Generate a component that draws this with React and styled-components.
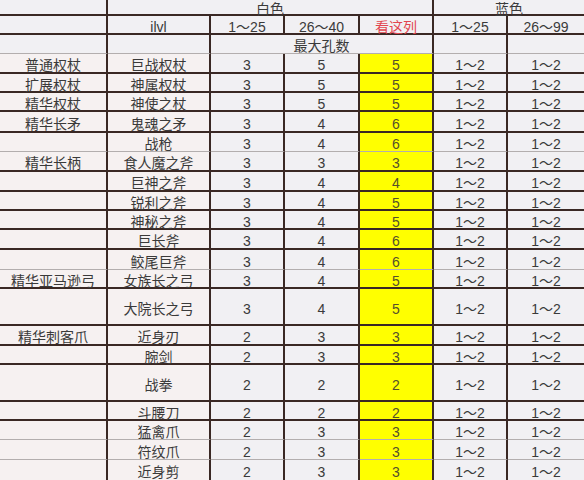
import React from 'react';
import styled, { createGlobalStyle } from 'styled-components';

const GlobalStyle = createGlobalStyle`
  body {
    margin: 0;
    background: #f2f1f3;
    overflow: hidden;
  }
`;

const DARK = '#3a2824';

const Sheet = styled.div`
  display: grid;
  grid-template-columns: 108px 103px 74px 75px 74px 74px 76px;
  grid-template-rows: ${(p) => p.$rows.map((h) => h + 'px').join(' ')};
  width: 584px;
  height: 480px;
  overflow: hidden;
  font-family: "Liberation Sans", "Noto Sans CJK SC", sans-serif;
  font-size: 14px;
  background: #f2f1f3;
`;

const Cell = styled.div`
  display: flex;
  align-items: center;
  justify-content: center;
  box-sizing: border-box;
  grid-column: span ${(p) => p.$span || 1};
  padding-top: 4px;
  line-height: 1;
  white-space: nowrap;
  border-right: ${(p) => (p.$last ? '0' : `2px solid ${DARK}`)};
  border-bottom: ${(p) =>
    p.$line === 'light' ? '1px solid #b3aeae' : p.$line === 'none' ? '0' : `2px solid ${DARK}`};
  background: ${(p) => (p.$yellow ? '#ffff00' : p.$tint ? '#f6f1f1' : '#f1f0f3')};
  color: ${(p) => (p.$red ? '#e2454f' : p.$yellow ? '#55502c' : '#3a3a3a')};
`;

const data = [
  ['普通权杖', '巨战权杖', 3, 5, 5, 'dark', 20],
  ['扩展权杖', '神属权杖', 3, 5, 5, 'dark', 19],
  ['精华权杖', '神使之杖', 3, 5, 5, 'dark', 19],
  ['精华长矛', '鬼魂之矛', 3, 4, 6, 'dark', 21],
  ['', '战枪', 3, 4, 6, 'light', 19],
  ['精华长柄', '食人魔之斧', 3, 3, 3, 'dark', 20],
  ['', '巨神之斧', 3, 4, 4, 'dark', 20],
  ['', '锐利之斧', 3, 4, 5, 'dark', 19],
  ['', '神秘之斧', 3, 4, 5, 'dark', 19],
  ['', '巨长斧', 3, 4, 6, 'dark', 20],
  ['', '鲛尾巨斧', 3, 4, 6, 'light', 20],
  ['精华亚马逊弓', '女族长之弓', 3, 4, 5, 'dark', 19],
  ['', '大院长之弓', 3, 4, 5, 'dark', 37],
  ['精华刺客爪', '近身刃', 2, 3, 3, 'dark', 20],
  ['', '腕剑', 2, 3, 3, 'dark', 19],
  ['', '战拳', 2, 2, 2, 'dark', 37],
  ['', '斗腰刀', 2, 2, 2, 'dark', 19],
  ['', '猛禽爪', 2, 3, 3, 'light', 19],
  ['', '符纹爪', 2, 3, 3, 'light', 20],
  ['', '近身剪', 2, 3, 3, 'none', 20],
];

const rowHeights = [16, 19, 19, ...data.map((r) => r[6])];

export default function App() {
  return (
    <>
      <GlobalStyle />
      <Sheet $rows={rowHeights}>
        <Cell />
        <Cell $span={4}>白色</Cell>
        <Cell $span={2} $last>蓝色</Cell>

        <Cell />
        <Cell>ilvl</Cell>
        <Cell>1～25</Cell>
        <Cell>26～40</Cell>
        <Cell $red>看这列</Cell>
        <Cell>1～25</Cell>
        <Cell $last>26～99</Cell>

        <Cell $line="light" />
        <Cell $line="light" />
        <Cell $span={3} $line="light">最大孔数</Cell>
        <Cell $line="light" />
        <Cell $line="light" $last />

        {data.map(([group, name, a, b, c, line]) => (
          <React.Fragment key={name}>
            <Cell $tint $line={line}>{group}</Cell>
            <Cell $tint $line={line}>{name}</Cell>
            <Cell $line={line}>{a}</Cell>
            <Cell $line={line}>{b}</Cell>
            <Cell $yellow $line={line}>{c}</Cell>
            <Cell $line={line}>1～2</Cell>
            <Cell $line={line} $last>1～2</Cell>
          </React.Fragment>
        ))}
      </Sheet>
    </>
  );
}
